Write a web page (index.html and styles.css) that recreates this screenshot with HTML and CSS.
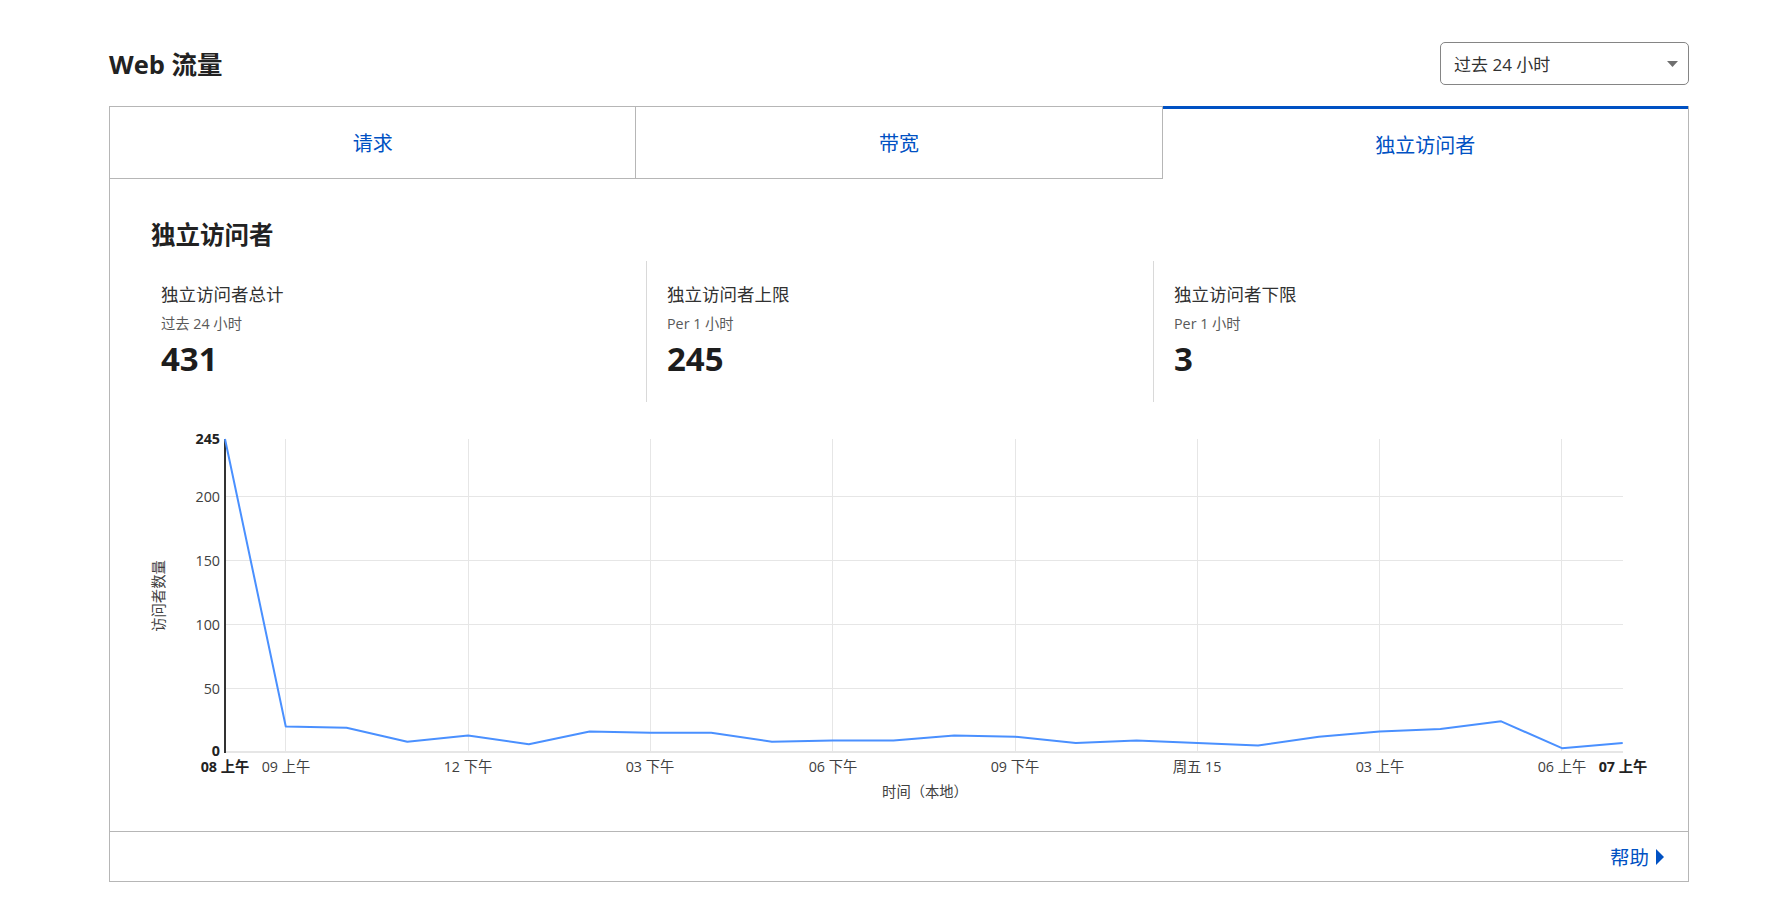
FILE: index.html
```html
<!DOCTYPE html>
<html lang="zh-CN">
<head>
<meta charset="utf-8">
<title>Web 流量</title>
<link rel="stylesheet" href="styles.css">
</head>
<body>
<div class="page">
  <header class="top">
    <h1 class="title">Web 流量</h1>
    <div class="select">
      <span>过去 24 小时</span>
      <svg class="caret" width="11" height="6" viewBox="0 0 11 6"><path d="M0 0H11L5.5 6Z" fill="#6f6f6f"/></svg>
    </div>
  </header>

  <section class="card">
    <nav class="tabs">
      <div class="tab">请求</div>
      <div class="tab">带宽</div>
      <div class="tab active">独立访问者</div>
    </nav>

    <div class="panel">
      <h2 class="panel-title">独立访问者</h2>
      <div class="stats">
        <div class="stat">
          <div class="stat-label">独立访问者总计</div>
          <div class="stat-sub">过去 24 小时</div>
          <div class="stat-value">431</div>
        </div>
        <div class="stat">
          <div class="stat-label">独立访问者上限</div>
          <div class="stat-sub">Per 1 小时</div>
          <div class="stat-value">245</div>
        </div>
        <div class="stat">
          <div class="stat-label">独立访问者下限</div>
          <div class="stat-sub">Per 1 小时</div>
          <div class="stat-value">3</div>
        </div>
      </div>

      <svg class="chart" width="1519" height="390" viewBox="0 0 1519 390">
        <g class="grid">
          <line x1="85" y1="268.5" x2="1482" y2="268.5"/>
          <line x1="85" y1="204.5" x2="1482" y2="204.5"/>
          <line x1="85" y1="140.5" x2="1482" y2="140.5"/>
          <line x1="85" y1="76.5" x2="1482" y2="76.5"/>
          <line x1="144.5" y1="19" x2="144.5" y2="331"/>
          <line x1="327.5" y1="19" x2="327.5" y2="331"/>
          <line x1="509.5" y1="19" x2="509.5" y2="331"/>
          <line x1="691.5" y1="19" x2="691.5" y2="331"/>
          <line x1="874.5" y1="19" x2="874.5" y2="331"/>
          <line x1="1056.5" y1="19" x2="1056.5" y2="331"/>
          <line x1="1238.5" y1="19" x2="1238.5" y2="331"/>
          <line x1="1420.5" y1="19" x2="1420.5" y2="331"/>
        </g>
        <line class="baseline" x1="85" y1="332" x2="1482" y2="332"/>
        <line class="yaxis" x1="84" y1="19" x2="84" y2="333"/>

        <polyline class="series" points="84,19 144.77,306.45 205.54,307.73 266.31,321.78 327.08,315.39 387.85,324.33 448.62,311.56 509.39,312.84 570.16,312.84 630.93,321.78 691.7,320.5 752.47,320.5 813.24,315.39 874.01,316.67 934.78,323.06 995.55,320.5 1056.32,323.06 1117.09,325.61 1177.86,316.67 1238.63,311.56 1299.4,309 1360.17,301.34 1420.94,328.17 1481.71,323.06"/>

        <g class="ylabels">
          <text class="strong" x="79" y="19" dy="0.35em">245</text>
          <text x="79" y="76.5" dy="0.35em">200</text>
          <text x="79" y="140.5" dy="0.35em">150</text>
          <text x="79" y="204.5" dy="0.35em">100</text>
          <text x="79" y="268.5" dy="0.35em">50</text>
          <text class="strong" x="79" y="331" dy="0.35em">0</text>
        </g>
        <g class="xlabels">
          <text class="strong" x="84" y="351.5">08 上午</text>
          <text x="145" y="351.5">09 上午</text>
          <text x="327" y="351.5">12 下午</text>
          <text x="509" y="351.5">03 下午</text>
          <text x="692" y="351.5">06 下午</text>
          <text x="874" y="351.5">09 下午</text>
          <text x="1056" y="351.5">周五 15</text>
          <text x="1239" y="351.5">03 上午</text>
          <text x="1421" y="351.5">06 上午</text>
          <text class="strong" x="1482" y="351.5">07 上午</text>
        </g>
        <text class="axis-title" x="784" y="377">时间（本地）</text>
        <text class="axis-title" transform="translate(23 176) rotate(-90)">访问者数量</text>
      </svg>
    </div>

    <footer class="card-foot">
      <a class="help" href="#">帮助<svg width="8" height="16" viewBox="0 0 8 16"><path d="M0 0L8 8L0 16Z" fill="#0051c3"/></svg></a>
    </footer>
  </section>
</div>
</body>
</html>
```

FILE: styles.css
```css
* {
  box-sizing: border-box;
}

html, body {
  margin: 0;
  padding: 0;
  background: #ffffff;
}

body {
  font-family: "Open Sans", "Noto Sans CJK SC", sans-serif;
  color: #313131;
}

.page {
  width: 1689px;
  padding: 42px 0 0 109px;
}

.top {
  display: flex;
  align-items: center;
  justify-content: space-between;
  height: 43px;
  margin-bottom: 21px;
}

.title {
  margin: 0;
  font-size: 25.5px;
  font-weight: 700;
  line-height: 30px;
  color: #222222;
}

.select {
  width: 249px;
  height: 43px;
  border: 1px solid #858585;
  border-radius: 5px;
  display: flex;
  align-items: center;
  justify-content: space-between;
  padding: 0 10px 0 13px;
  font-size: 17px;
  color: #313131;
}

.caret {
  display: block;
}

.card {
  width: 1580px;
  border: 1px solid #b6b6b6;
  border-top: none;
}

.tabs {
  display: flex;
}

.tab {
  flex: 1 1 0;
  height: 73px;
  display: flex;
  align-items: center;
  justify-content: center;
  font-size: 20px;
  color: #0051c3;
  border-top: 1px solid #b6b6b6;
  border-bottom: 1px solid #b6b6b6;
  border-right: 1px solid #b6b6b6;
}

.tab.active {
  border-top: 3px solid #0051c3;
  border-bottom: none;
  border-right: none;
  padding-top: 1px;
}

.panel {
  padding: 41px 27px 21px 31px;
}

.panel-title {
  margin: 0 0 11px 10px;
  font-size: 24.5px;
  font-weight: 700;
  line-height: 30px;
  color: #222222;
}

.stats {
  display: grid;
  grid-template-columns: 505px 507px 507px;
  height: 141px;
}

.stat {
  padding: 22px 20px 0;
}

.stat + .stat {
  border-left: 1px solid #d9d9d9;
}

.stat-label {
  font-size: 17.5px;
  line-height: 23px;
  color: #313131;
}

.stat-sub {
  margin-top: 9px;
  font-size: 14.3px;
  line-height: 18px;
  color: #595959;
}

.stat-value {
  margin-top: 6px;
  font-size: 33px;
  font-weight: 700;
  line-height: 40px;
  color: #1d1d1d;
}

.chart {
  display: block;
  margin-top: 18px;
  font-family: "Open Sans", "Noto Sans CJK SC", sans-serif;
}

.grid line {
  stroke: #e6e6e6;
  stroke-width: 1;
}

.baseline {
  stroke: #e6e6e6;
  stroke-width: 2;
}

.yaxis {
  stroke: #333333;
  stroke-width: 2;
}

.series {
  fill: none;
  stroke: #4a90ff;
  stroke-width: 2;
  stroke-linejoin: round;
}

.ylabels text {
  font-size: 14.3px;
  fill: #404040;
  text-anchor: end;
}

.xlabels text {
  font-size: 14.3px;
  fill: #404040;
  text-anchor: middle;
}

.chart .strong {
  font-weight: 700;
  fill: #222222;
}

.axis-title {
  font-size: 14.3px;
  fill: #404040;
  text-anchor: middle;
}

.card-foot {
  border-top: 1px solid #b6b6b6;
  height: 50px;
  display: flex;
  align-items: center;
  justify-content: flex-end;
  padding-right: 24px;
}

.help {
  display: flex;
  align-items: center;
  gap: 7px;
  font-size: 19.5px;
  color: #0051c3;
  text-decoration: none;
}

.help svg {
  display: block;
}
```
